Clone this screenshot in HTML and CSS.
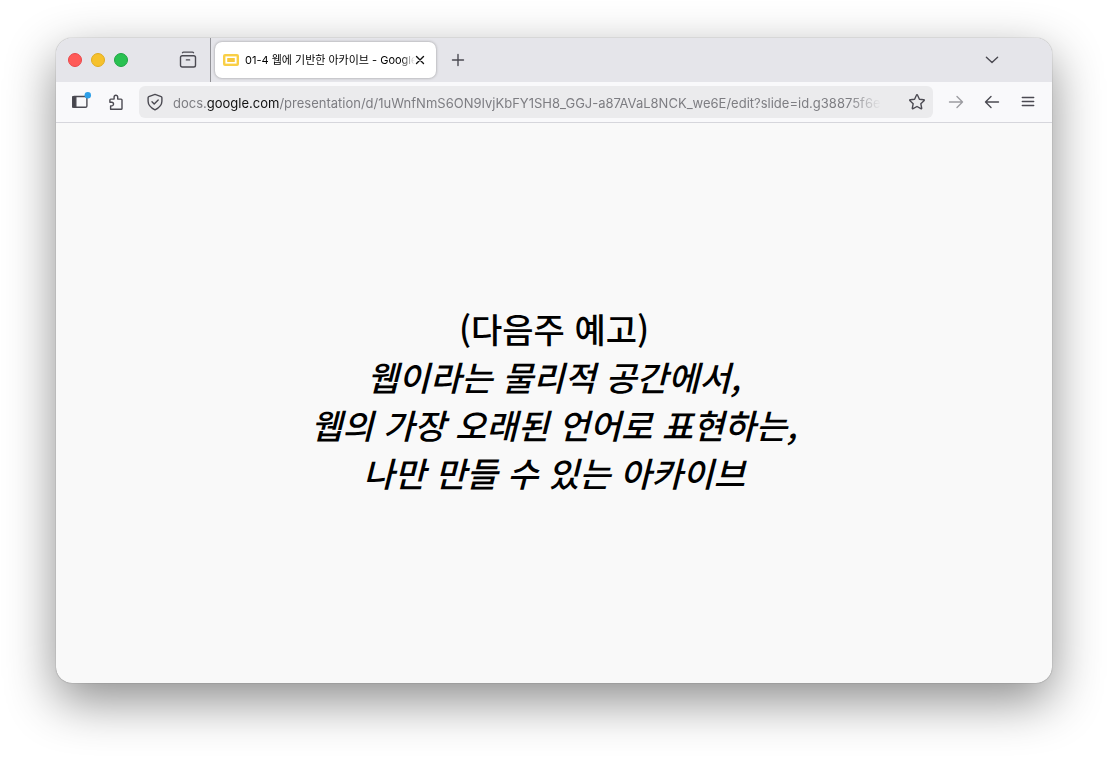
FILE: index.html
```
<!DOCTYPE html>
<html lang="ko">
<head>
<meta charset="utf-8">
<meta name="viewport" content="width=device-width, initial-scale=1">
<title>01-4 웹에 기반한 아카이브</title>
<link rel="stylesheet" href="styles.css">
</head>
<body>
<div class="window">
  <header class="tabstrip">
    <div class="lights">
      <button class="light light-close" aria-label="Close window"></button>
      <button class="light light-min" aria-label="Minimize window"></button>
      <button class="light light-zoom" aria-label="Zoom window"></button>
    </div>
    <button class="icon-button recent" aria-label="Recent browsing">
      <svg width="18" height="18" viewBox="0 0 18 18"><path d="M3.5 1.7Q3.8 1.1 4.6 1.1h8.8q.8 0 1.1.6M3.3 4.8h11.4q1.8 0 1.8 1.8v7.6q0 1.8-1.8 1.8H3.3q-1.8 0-1.8-1.8V6.6q0-1.8 1.8-1.8zM7.4 8.9h3.2"/></svg>
    </button>
    <div class="tab">
      <svg class="favicon" width="16" height="12" viewBox="0 0 16 12"><rect width="16" height="12" rx="2" fill="#f9cf46"/><rect x="2.4" y="2.4" width="11.2" height="7.2" fill="#fff"/><rect x="4.2" y="4" width="7.6" height="4" rx=".5" fill="#f8c83b"/></svg>
      <span class="tab-title">01-4 웹에 기반한 아카이브 - Google</span>
      <button class="tab-close" aria-label="Close tab"><svg width="10" height="10" viewBox="0 0 10 10"><path d="M1.5 1.5l7 7M8.5 1.5l-7 7"/></svg></button>
    </div>
    <button class="icon-button new-tab" aria-label="New tab">
      <svg width="14" height="14" viewBox="0 0 14 14"><path d="M7 1.5v11M1.5 7h11"/></svg>
    </button>
    <button class="icon-button all-tabs" aria-label="List all tabs">
      <svg width="14" height="14" viewBox="0 0 14 14"><path d="M1.4 4.2L7 9.6l5.6-5.4"/></svg>
    </button>
  </header>
  <nav class="toolbar">
    <button class="icon-button" aria-label="Sidebar">
      <svg class="sidebar-icon" width="20" height="20" viewBox="0 0 20 20"><rect x="2.7" y="4.5" width="14.2" height="10.8" rx="1.4"/><path d="M2.7 5h3.1v10H2.7z" fill="#45444c"/><circle cx="17.8" cy="3.2" r="3.2" fill="#2d9fe8" stroke="none"/></svg>
    </button>
    <button class="icon-button" aria-label="Extensions">
      <svg width="18" height="18" viewBox="0 0 18 18"><path d="M3.6 16.3V12.9h1.1a1.8 1.8 0 0 0 0-3.6H2.9V7q0-.9.9-.9h3.3V4a1.8 1.8 0 0 1 3.6 0v2.1h3.4q.9 0 .9.9v8.4q0 .9-.9.9z"/></svg>
    </button>
    <div class="urlbar">
      <button class="url-button" aria-label="Site protections"><svg width="18" height="18" viewBox="0 0 18 18"><path d="M9 1.4L15.2 3.7q.7.3.7 1v3.6q0 5.2-6.9 8.5-6.9-3.3-6.9-8.5V4.7q0-.7.7-1zM6 8.7l2.2 2.2 4-4"/></svg></button>
      <span class="url">docs.<span class="domain">google.com</span>/presentation/d/1uWnfNmS6ON9IvjKbFY1SH8_GGJ-a87AVaL8NCK_we6E/edit?slide=id.g38875f6e</span>
      <button class="url-button" aria-label="Bookmark"><svg width="18" height="18" viewBox="0 0 18 18"><path d="M9 1.7q.4 0 .6.5l1.8 4 4.3.5q1.1.2.3 1l-3.2 3 .9 4.4q.1 1-.8.6L9 13.5l-3.9 2.2q-.9.4-.8-.6l.9-4.4-3.2-3q-.8-.8.3-1l4.3-.5 1.8-4q.2-.5.6-.5z"/></svg></button>
    </div>
    <button class="icon-button forward" aria-label="Forward">
      <svg width="18" height="18" viewBox="0 0 18 18"><path d="M2.5 9h13M10 3.5L15.5 9 10 14.5"/></svg>
    </button>
    <button class="icon-button" aria-label="Back">
      <svg width="18" height="18" viewBox="0 0 18 18"><path d="M15.5 9h-13M8 3.5L2.5 9 8 14.5"/></svg>
    </button>
    <button class="icon-button" aria-label="Menu">
      <svg width="18" height="18" viewBox="0 0 18 18"><path d="M3.3 4.5h11.4M3.3 8.5h11.4M3.3 12.5h11.4"/></svg>
    </button>
  </nav>
  <main class="slide">
    <p class="lines">(다음주 예고)<br><em>웹이라는 물리적 공간에서,<br>웹의 가장 오래된 언어로 표현하는,<br>나만 만들 수 있는 아카이브</em></p>
  </main>
</div>
</body>
</html>
```
FILE: styles.css
```
* { box-sizing: border-box; }

body {
  margin: 0;
  min-height: 100vh;
  padding: 38px 56px 74px;
  display: flex;
  background: #fff;
  color: #000;
  font-family: Inter, "Noto Sans CJK KR", sans-serif;
}

button {
  margin: 0;
  padding: 0;
  border: 0;
  background: none;
}

svg {
  display: block;
  fill: none;
  stroke: #4b4a52;
  stroke-width: 1.4;
  stroke-linecap: round;
  stroke-linejoin: round;
}

.window {
  flex: 1;
  min-width: 0;
  display: flex;
  flex-direction: column;
  overflow: hidden;
  border-radius: 16px;
  background: #f9f9f9;
  box-shadow: 0 0 1px rgba(0, 0, 0, .6), 0 18px 50px rgba(0, 0, 0, .45);
}

.tabstrip {
  display: flex;
  align-items: center;
  height: 44px;
  padding-left: 12px;
  padding-right: 44px;
  background: #e5e5ea;
}

.lights { display: flex; gap: 9px; }

.light {
  width: 14px;
  height: 14px;
  border: 1px solid #e9474a;
  border-radius: 50%;
  background: #ff5a58;
}
.light-min { border-color: #e0ac20; background: #f6c12c; }
.light-zoom { border-color: #1fa544; background: #29c151; }

.icon-button {
  flex: none;
  width: 32px;
  height: 32px;
  display: grid;
  place-items: center;
}

.recent { margin-left: 44px; }

.tab {
  position: relative;
  flex: 0 1 221px;
  min-width: 0;
  height: 36px;
  margin-left: 11px;
  padding: 0 11px 0 8px;
  display: flex;
  align-items: center;
  border-radius: 7px;
  background: #fff;
  box-shadow: 0 0 3px rgba(0, 0, 0, .35);
}
.tab::before {
  content: "";
  position: absolute;
  left: -5px;
  top: -4px;
  width: 1px;
  height: 44px;
  background: #929297;
}
.favicon { flex: none; margin-right: 6px; stroke: none; }
.tab-title {
  flex: 1;
  min-width: 0;
  overflow: hidden;
  white-space: nowrap;
  font-size: 11px;
  font-weight: 400;
  line-height: 20px;
  mask-image: linear-gradient(to left, transparent, #000 14px);
}
.tab-close { flex: none; }
.tab-close svg { stroke: #111; }

.new-tab { margin-left: 6px; }
.all-tabs { margin-left: auto; }

.toolbar {
  display: flex;
  align-items: center;
  gap: 4px;
  height: 41px;
  padding: 0 8px;
  border-bottom: 1px solid #d6d6dc;
  background: #f9f9fb;
}
.sidebar-icon { overflow: visible; }

.urlbar {
  flex: 1;
  min-width: 0;
  height: 32px;
  margin: 0 3px;
  padding: 0 7px;
  display: flex;
  align-items: center;
  border-radius: 6px;
  background: #ebebed;
}
.url-button { flex: none; }
.url {
  flex: 0 1 auto;
  min-width: 0;
  margin: 0 auto 0 9px;
  padding-top: 1px;
  overflow: hidden;
  white-space: nowrap;
  font-size: 13px;
  line-height: 20px;
  color: #7d7d82;
  mask-image: linear-gradient(to left, transparent, #000 32px);
}
.domain { color: #111; }
.forward svg { stroke: #9c9ca1; }

.slide {
  flex: 1;
  display: grid;
  place-items: center;
  padding-bottom: 4px;
  text-align: center;
}
.lines {
  margin: 0;
  font-family: "Noto Sans CJK KR", sans-serif;
  font-size: 34px;
  font-weight: 500;
  line-height: 48px;
}
```
